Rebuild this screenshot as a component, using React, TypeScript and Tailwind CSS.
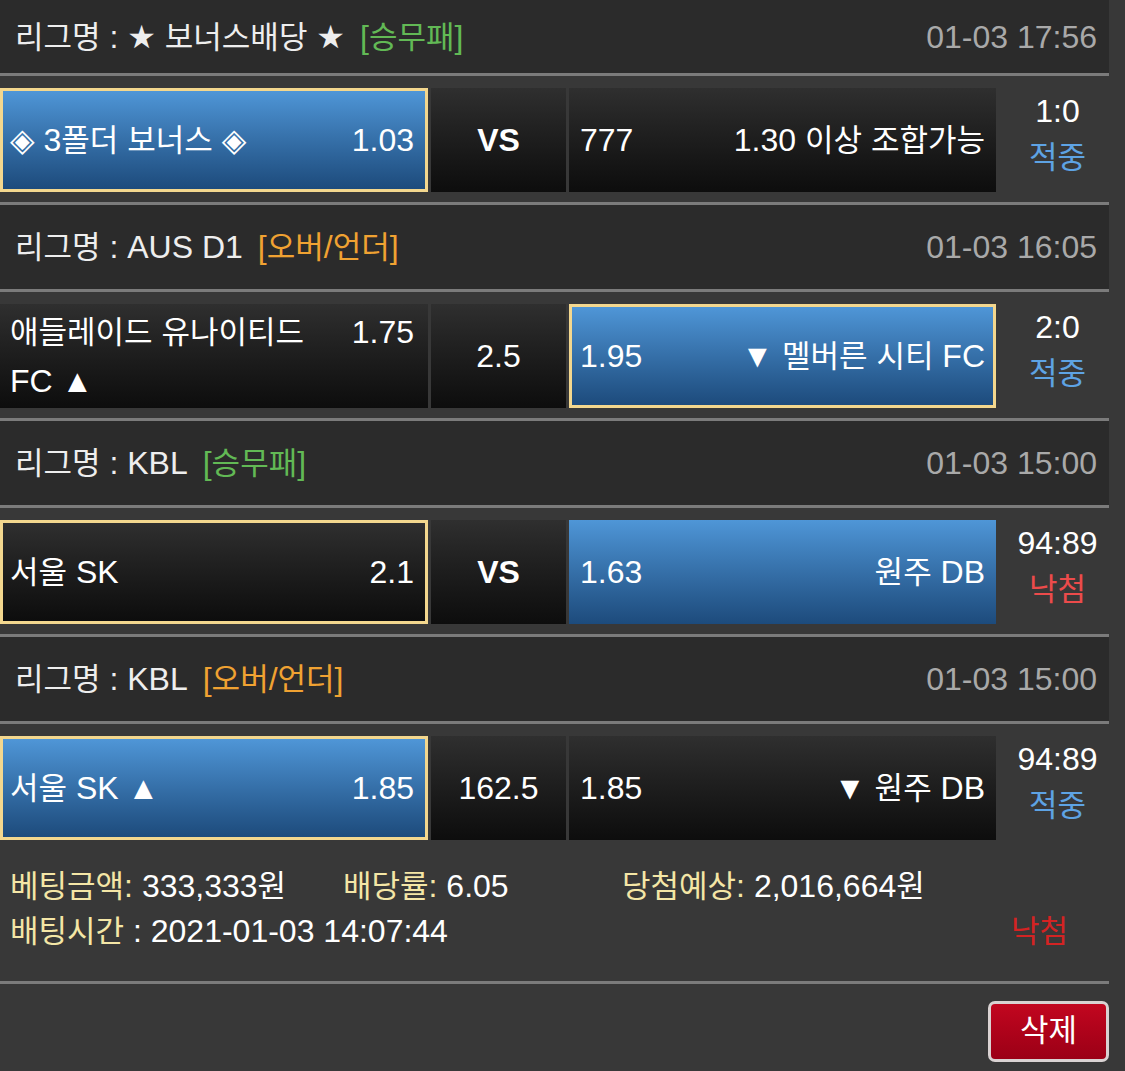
import React from "react";

function T({ s }: { s: string }) {
  const parts = s.split(/([\uAC00-\uD7A3]+)/);
  return (
    <>
      {parts.map((p, i) =>
        /[\uAC00-\uD7A3]/.test(p) ? (
          <span key={i} className="text-[31px]">
            {p}
          </span>
        ) : (
          <span key={i}>{p}</span>
        )
      )}
    </>
  );
}

type Side = { name: string; odds: string; sel?: boolean; blue?: boolean };
type Match = {
  league: string;
  kind: string;
  kindColor: "green" | "orange";
  date: string;
  left: Side;
  mid: string;
  midBold?: boolean;
  right: Side;
  score: string;
  result: string;
  win: boolean;
};

const matches: Match[] = [
  {
    league: "리그명 : ★ 보너스배당 ★",
    kind: "[승무패]",
    kindColor: "green",
    date: "01-03 17:56",
    left: { name: "◈ 3폴더 보너스 ◈", odds: "1.03", sel: true, blue: true },
    mid: "VS",
    midBold: true,
    right: { name: "1.30 이상 조합가능", odds: "777" },
    score: "1:0",
    result: "적중",
    win: true,
  },
  {
    league: "리그명 : AUS D1",
    kind: "[오버/언더]",
    kindColor: "orange",
    date: "01-03 16:05",
    left: { name: "애들레이드 유나이티드 FC ▲", odds: "1.75" },
    mid: "2.5",
    right: { name: "▼ 멜버른 시티 FC", odds: "1.95", sel: true, blue: true },
    score: "2:0",
    result: "적중",
    win: true,
  },
  {
    league: "리그명 : KBL",
    kind: "[승무패]",
    kindColor: "green",
    date: "01-03 15:00",
    left: { name: "서울 SK", odds: "2.1", sel: true },
    mid: "VS",
    midBold: true,
    right: { name: "원주 DB", odds: "1.63", blue: true },
    score: "94:89",
    result: "낙첨",
    win: false,
  },
  {
    league: "리그명 : KBL",
    kind: "[오버/언더]",
    kindColor: "orange",
    date: "01-03 15:00",
    left: { name: "서울 SK ▲", odds: "1.85", sel: true, blue: true },
    mid: "162.5",
    right: { name: "▼ 원주 DB", odds: "1.85" },
    score: "94:89",
    result: "적중",
    win: true,
  },
];

function boxClass(side: Side) {
  const bg = side.blue
    ? "bg-linear-to-b from-[#4f96d7] to-[#1d4b7c]"
    : "bg-linear-to-b from-[#2f2f2f] to-[#0d0d0d]";
  const border = side.sel ? "border-[3px] border-[#f3d78e]" : "";
  return `${bg} ${border}`;
}

function Sep() {
  return <div className="h-[3px] bg-[#7b7b7b]" />;
}

export default function App() {
  return (
    <div className="min-h-[1071px] w-[1125px] bg-[#383838] text-white font-['Liberation_Sans','DejaVu_Sans','Noto_Sans_CJK_KR',sans-serif] text-[32px]">
      <div className="w-[1109px]">
        {matches.map((m, idx) => (
          <React.Fragment key={idx}>
            {idx > 0 && <Sep />}
            <div
              className={`${idx === 0 ? "h-[73px]" : "h-[84px]"} bg-[#2b2b2b] flex items-center justify-between pl-[15px] pr-[12px] leading-none`}
            >
              <div className="text-[#eeeeee] whitespace-nowrap">
                <T s={m.league} />
                <span
                  className={`ml-[15px] ${m.kindColor === "green" ? "text-[#62b955]" : "text-[#f0a232]"}`}
                >
                  <T s={m.kind} />
                </span>
              </div>
              <div className="text-[#a9a9a9]">{m.date}</div>
            </div>
            <Sep />
            <div className="pt-[12px] pb-[10px] flex">
              <div
                className={`w-[428px] h-[104px] flex items-center leading-[48px] ${m.left.sel ? "pl-[7px] pr-[11px]" : "pl-[10px] pr-[14px]"} ${boxClass(m.left)}`}
              >
                <div className="w-full">
                  <span className="float-right ml-[16px]">{m.left.odds}</span>
                  <T s={m.left.name} />
                </div>
              </div>
              <div className="ml-[3px] w-[135px] h-[104px] flex items-center justify-center bg-linear-to-b from-[#2f2f2f] to-[#0d0d0d]">
                <span className={m.midBold ? "font-bold" : ""}>{m.mid}</span>
              </div>
              <div
                className={`ml-[3px] w-[427px] h-[104px] flex items-center justify-between whitespace-nowrap ${m.right.sel ? "pl-[8px] pr-[8px]" : "pl-[11px] pr-[11px]"} ${boxClass(m.right)}`}
              >
                <span>{m.right.odds}</span>
                <span>
                  <T s={m.right.name} />
                </span>
              </div>
              <div className="flex-1 flex flex-col items-center pl-[10px] leading-[46px]">
                <div>{m.score}</div>
                <div className={m.win ? "text-[#5ea3e4]" : "text-[#ec4b4b]"}>
                  <T s={m.result} />
                </div>
              </div>
            </div>
          </React.Fragment>
        ))}
        <div className="pt-[14px] pb-[27px] pl-[10px] pr-[41px] leading-[45px] whitespace-nowrap">
          <div className="flex">
            <div className="w-[333px]">
              <span className="text-[#f4e6a6]">
                <T s="베팅금액:" />
              </span>{" "}
              <T s="333,333원" />
            </div>
            <div className="w-[279px]">
              <span className="text-[#f4e6a6]">
                <T s="배당률:" />
              </span>{" "}
              6.05
            </div>
            <div>
              <span className="text-[#f4e6a6]">
                <T s="당첨예상:" />
              </span>{" "}
              <T s="2,016,664원" />
            </div>
          </div>
          <div className="flex justify-between">
            <div>
              <span className="text-[#f4e6a6]">
                <T s="배팅시간" />
              </span>{" "}
              : 2021-01-03 14:07:44
            </div>
            <div className="text-[#d42323]">
              <T s="낙첨" />
            </div>
          </div>
        </div>
        <Sep />
        <div className="pt-[17px] flex justify-end">
          <button className="w-[121px] h-[61px] rounded-[7px] border-[3px] border-[#d9d2d2] bg-linear-to-b from-[#c2061f] to-[#9b0016] text-white flex items-center justify-center">
            <T s="삭제" />
          </button>
        </div>
      </div>
    </div>
  );
}
